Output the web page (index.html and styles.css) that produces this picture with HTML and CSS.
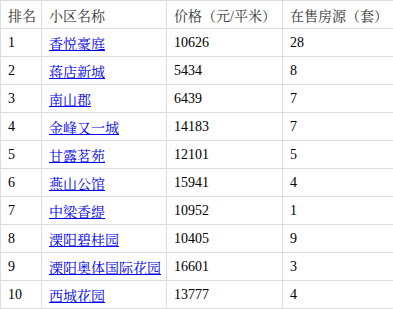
FILE: index.html
```html
<!DOCTYPE html>
<html lang="zh">
<head>
<meta charset="utf-8">
<link rel="stylesheet" href="styles.css">
</head>
<body>
<table class="rank">
<thead>
<tr><th class="c1">排名</th><th class="c2">小区名称</th><th class="c3">价格（元/平米）</th><th class="c4">在售房源（套）</th></tr>
</thead>
<tbody>
<tr><td>1</td><td><a href="#">香悦豪庭</a></td><td>10626</td><td>28</td></tr>
<tr><td>2</td><td><a href="#">蒋店新城</a></td><td>5434</td><td>8</td></tr>
<tr><td>3</td><td><a href="#">南山郡</a></td><td>6439</td><td>7</td></tr>
<tr><td>4</td><td><a href="#">金峰又一城</a></td><td>14183</td><td>7</td></tr>
<tr><td>5</td><td><a href="#">甘露茗苑</a></td><td>12101</td><td>5</td></tr>
<tr><td>6</td><td><a href="#">燕山公馆</a></td><td>15941</td><td>4</td></tr>
<tr><td>7</td><td><a href="#">中梁香缇</a></td><td>10952</td><td>1</td></tr>
<tr><td>8</td><td><a href="#">溧阳碧桂园</a></td><td>10405</td><td>9</td></tr>
<tr><td>9</td><td><a href="#">溧阳奥体国际花园</a></td><td>16601</td><td>3</td></tr>
<tr><td>10</td><td><a href="#">西城花园</a></td><td>13777</td><td>4</td></tr>
</tbody>
</table>
</body>
</html>
```
FILE: styles.css
```css
html, body {
  margin: 0;
  padding: 0;
  background: #fff;
}
body {
  font-family: "Liberation Serif", "Noto Serif CJK SC", "Noto Sans CJK SC", serif;
  font-size: 14px;
  color: #000;
}
.rank {
  border-collapse: collapse;
  table-layout: fixed;
  width: 393px;
}
.rank th, .rank td {
  border: 1px solid #ddd;
  height: 28px;
  padding: 0 0 0 7px;
  text-align: left;
  font-weight: normal;
  vertical-align: middle;
  box-sizing: border-box;
  white-space: nowrap;
}
.rank th {
  color: #333;
}
.c1 { width: 41px; }
.c2 { width: 125px; }
.c3 { width: 116px; }
.c4 { width: 111px; }
.rank a {
  color: #00e;
  text-decoration: underline;
}
```
